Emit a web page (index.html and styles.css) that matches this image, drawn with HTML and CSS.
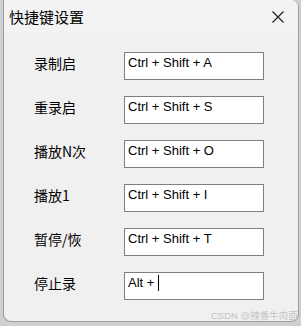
FILE: index.html
```html
<!DOCTYPE html>
<html lang="zh-CN">
<head>
    <meta charset="UTF-8">
    <meta name="viewport" content="width=device-width, initial-scale=1.0">
    <title>快捷键设置</title>
    <link rel="stylesheet" href="styles.css">
</head>
<body>
    <div class="window">
        <div class="title-bar">
            <span class="title">快捷键设置</span>
            <svg class="close" width="12" height="12" viewBox="0 0 12 12">
                <path d="M0.5 0.5 L11.5 11.5 M11.5 0.5 L0.5 11.5" stroke="#1a1a1a" stroke-width="1.1" fill="none"/>
            </svg>
        </div>

        <div class="form">
            <div class="row">
                <span class="label">录制启</span>
                <div class="hotkey">Ctrl + Shift + A</div>
            </div>
            <div class="row">
                <span class="label">重录启</span>
                <div class="hotkey">Ctrl + Shift + S</div>
            </div>
            <div class="row">
                <span class="label">播放N次</span>
                <div class="hotkey">Ctrl + Shift + O</div>
            </div>
            <div class="row">
                <span class="label">播放1</span>
                <div class="hotkey">Ctrl + Shift + I</div>
            </div>
            <div class="row">
                <span class="label">暂停/恢</span>
                <div class="hotkey">Ctrl + Shift + T</div>
            </div>
            <div class="row">
                <span class="label">停止录</span>
                <div class="hotkey">Alt +<span class="caret"></span></div>
            </div>
        </div>
    </div>

    <div class="watermark">CSDN @辣香牛肉面</div>
</body>
</html>
```

FILE: styles.css
```css
body {
    margin: 0;
    padding: 0;
    background-color: #cfcfcf;
    font-family: "Liberation Sans", "Noto Sans CJK SC", sans-serif;
    color: #000;
    width: 301px;
    height: 326px;
    overflow: hidden;
}
.window {
    box-sizing: border-box;
    margin-left: 3px;
    width: 296px;
    height: 322px;
    border: 1px solid #9c9c9c;
    border-top: none;
    border-radius: 0 8px 8px 8px;
    background-color: #f0f0f0;
    overflow: hidden;
}
.title-bar {
    height: 33px;
    background-color: #f3f3f3;
    display: flex;
    align-items: center;
    justify-content: space-between;
    padding: 0 14px 0 5px;
}
.title {
    font-family: "Noto Sans CJK SC", sans-serif;
    font-size: 15px;
    line-height: 20px;
}
.close {
    display: block;
}
.form {
    padding: 19px 0 0 30px;
    display: flex;
    flex-direction: column;
    gap: 16px;
}
.row {
    display: flex;
    align-items: flex-start;
    height: 28px;
}
.label {
    width: 90px;
    font-family: "Noto Sans CJK SC", sans-serif;
    font-size: 14px;
    line-height: 22px;
}
.hotkey {
    box-sizing: border-box;
    width: 140px;
    height: 28px;
    border: 1px solid #7f7f7f;
    background-color: #fff;
    padding: 2px 3px 0;
    font-size: 13px;
    line-height: 16px;
    white-space: nowrap;
}
.caret {
    display: inline-block;
    width: 1px;
    height: 16px;
    margin-left: 4px;
    background-color: #000;
    vertical-align: -4px;
}
.watermark {
    position: absolute;
    left: 211px;
    top: 308px;
    font-family: "Liberation Sans", "Noto Sans CJK SC", sans-serif;
    font-size: 9.5px;
    color: #c4c4c4;
    white-space: nowrap;
}
```
